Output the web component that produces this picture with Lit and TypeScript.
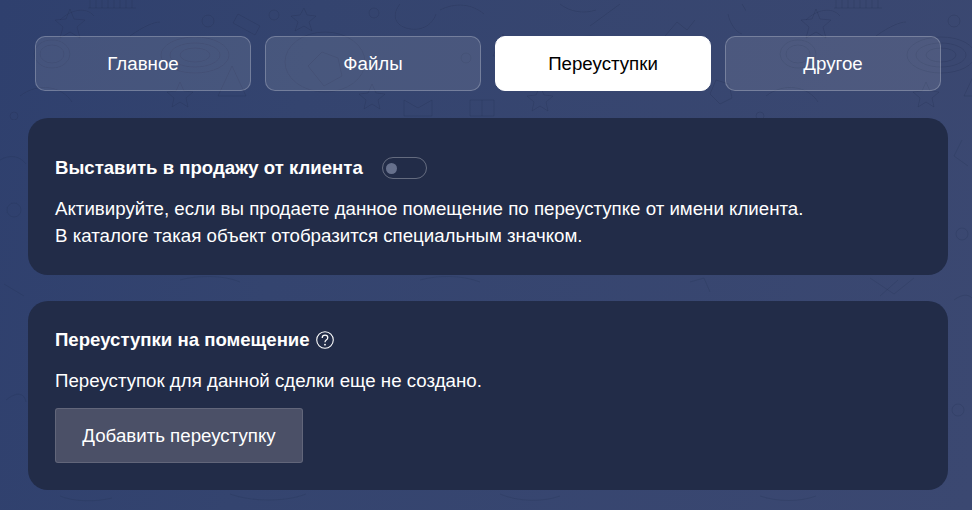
import { LitElement, html, css, svg } from "lit";
import { customElement } from "lit/decorators.js";

const tile = svg`
  <g fill="none" stroke="#1f2b4d" stroke-opacity=".26" stroke-width="1">
    <path d="M90 0v8M96 0v8M102 0v8M108 0v8M114 0v8M120 0v8M126 0v8M132 0v8M88 8h48"/>
    <path d="M70 9l4 10 11 1-8 7 3 11-10-6-10 6 3-11-8-7 11-1z"/>
    <circle cx="208" cy="21" r="6"/>
    <path d="M238 14l22 12-5 9-22-12z"/>
    <circle cx="274" cy="15" r="5"/>
    <path d="M304 8l3 7 9 1-7 6 3 9-8-5-9 5 3-9-7-6 9-1z"/>
    <path d="M130 36c14-10 24-14 30-14"/>
    <ellipse cx="52" cy="54" rx="18" ry="14"/>
    <ellipse cx="52" cy="54" rx="12" ry="9"/>
    <ellipse cx="195" cy="55" rx="34" ry="18"/>
    <ellipse cx="195" cy="55" rx="25" ry="12"/>
    <ellipse cx="195" cy="55" rx="15" ry="7"/>
    <ellipse cx="325" cy="62" rx="40" ry="30"/>
    <path d="M308 66l14-14 16 6 4 18-18 10z"/>
    <circle cx="374" cy="13" r="5"/>
    <path d="M400 4c-8 10-6 20 6 24 14 4 26-2 30-14"/>
    <path d="M440 10c16-8 32-6 44 4"/>
    <path d="M503 34l-10 22h20z"/>
    <circle cx="466" cy="58" r="5"/>
    <path d="M232 66l-14 30h28z"/>
    <path d="M180 82l4 9 9 1-7 6 2 9-8-5-8 5 2-9-7-6 9-1z"/>
    <path d="M372 84l4 9 9 1-7 6 2 9-8-5-8 5 2-9-7-6 9-1z"/>
    <path d="M20 96c18-14 42-10 52 6"/>
    <circle cx="14" cy="116" r="4"/>
    <path d="M404 100l14 8 14-8v16h-28z"/>
    <path d="M470 100h24v16h-24zM482 100v16"/>
    <path d="M60 20c10-10 26-14 34-4"/>
    <path d="M560 4c10 8 24 10 36 6"/>
    <path d="M590 26l30-22"/>
    <ellipse cx="590" cy="58" rx="40" ry="22"/>
    <ellipse cx="590" cy="58" rx="28" ry="14"/>
    <circle cx="650" cy="76" r="6"/>
    <path d="M728 14c2 10 8 18 14 20M742 4l12 20"/>
    <path d="M540 86l4 9 9 1-7 6 2 9-8-5-8 5 2-9-7-6 9-1z"/>
    <path d="M665 36l12-14 10 8 8-10"/>
    <path d="M716 80l13 4 3 14-12 6-10-10z"/>
  </g>`;

const lower = svg`
  <g fill="none" stroke="#1f2b4d" stroke-opacity=".2" stroke-width="1">
    <path d="M0 160c10-6 20-4 26 4"/>
    <circle cx="14" cy="210" r="7"/>
    <path d="M4 284l20 12"/>
    <path d="M962 140l-8 16 14 10"/>
    <path d="M954 300c8-6 14-6 18-2"/>
    <circle cx="962" cy="234" r="6"/>
    <path d="M870 278l24 16 20-16M880 296l18-16"/>
    <path d="M180 280c18-5 44-5 60 2"/>
    <path d="M420 280c18-5 42-5 60 2"/>
    <path d="M690 282l14-4 6 14"/>
    <path d="M6 400c10-8 18-8 20 2"/>
    <circle cx="958" cy="410" r="6"/>
    <path d="M60 496c14 6 36 6 52 2M230 494c22 8 56 8 76 0M500 494c18 8 44 8 60 2M760 496c18 6 40 6 56 0"/>
  </g>`;

@customElement("app-root")
export class AppRoot extends LitElement {
  static styles = css`
    :host {
      display: block;
      position: relative;
      height: 510px;
      overflow: hidden;
      font-family: "Liberation Sans", Arial, sans-serif;
      color: #fff;
      background: linear-gradient(100deg, #2f406e 0%, #34446f 30%, #3b4871 100%);
    }
    .doodles {
      position: absolute;
      inset: 0;
      width: 972px;
      height: 510px;
    }
    .page {
      position: relative;
      padding: 36px 24px 20px 28px;
      display: flex;
      flex-direction: column;
    }
    .tabs {
      display: flex;
      gap: 14px;
      padding-left: 7px;
      margin-bottom: 27px;
    }
    .tab {
      width: 216px;
      height: 55px;
      box-sizing: border-box;
      display: flex;
      align-items: center;
      justify-content: center;
      border: 1px solid rgba(255, 255, 255, 0.24);
      border-radius: 10px;
      background: rgba(255, 255, 255, 0.1);
      font-size: 18.7px;
    }
    .tab.active {
      background: #fff;
      border-color: #fff;
      color: #000;
    }
    .card {
      background: #222c48;
      border-radius: 20px;
      padding: 0 27px;
      box-sizing: border-box;
    }
    .first {
      height: 157px;
      padding-top: 39px;
      margin-bottom: 26px;
    }
    .second {
      height: 189px;
      padding-top: 28px;
    }
    .title {
      display: flex;
      align-items: center;
      height: 22px;
      font-size: 18.6px;
      font-weight: 700;
    }
    .toggle {
      width: 45px;
      height: 22px;
      box-sizing: border-box;
      margin-left: 19px;
      border: 1px solid rgba(255, 255, 255, 0.3);
      border-radius: 11px;
      display: flex;
      align-items: center;
      padding-left: 3px;
    }
    .knob {
      width: 11px;
      height: 11px;
      border-radius: 50%;
      background: #66708c;
    }
    .help {
      margin-left: 6px;
      display: block;
    }
    p {
      margin: 16px 0 0;
      font-size: 18.7px;
      line-height: 27px;
    }
    .add {
      display: flex;
      align-items: center;
      justify-content: center;
      width: 248px;
      height: 55px;
      box-sizing: border-box;
      margin-top: 14px;
      border: 1px solid rgba(255, 255, 255, 0.13);
      border-radius: 3px;
      background: #4b5067;
      color: #fff;
      font: 18.7px "Liberation Sans", Arial, sans-serif;
      padding: 0;
    }
  `;

  render() {
    return html`
      <svg class="doodles" viewBox="0 0 972 510" aria-hidden="true">
        <defs>
          <pattern id="p" width="746" height="134" patternUnits="userSpaceOnUse">${tile}</pattern>
        </defs>
        <rect width="972" height="120" fill="url(#p)" />
        ${lower}
      </svg>
      <div class="page">
        <nav class="tabs">
          <div class="tab">Главное</div>
          <div class="tab">Файлы</div>
          <div class="tab active">Переуступки</div>
          <div class="tab">Другое</div>
        </nav>
        <section class="card first">
          <div class="title">
            Выставить в продажу от клиента
            <span class="toggle"><span class="knob"></span></span>
          </div>
          <p>
            Активируйте, если вы продаете данное помещение по переуступке от имени клиента.<br />
            В каталоге такая объект отобразится специальным значком.
          </p>
        </section>
        <section class="card second">
          <div class="title">
            Переуступки на помещение
            <svg class="help" width="18" height="18" viewBox="0 0 20 20" fill="none" stroke="#fff">
              <circle cx="10" cy="10" r="9.2" stroke-width="1.2" />
              <path d="M6.9 7.8c0-1.9 1.4-3.1 3.2-3.1s3 1.1 3 2.8c0 1.3-.8 2-1.7 2.6-.9.6-1.4 1.2-1.4 2.3" stroke-width="1.4" />
              <circle cx="10" cy="15.2" r="1" fill="#fff" stroke="none" />
            </svg>
          </div>
          <p>Переуступок для данной сделки еще не создано.</p>
          <button class="add">Добавить переуступку</button>
        </section>
      </div>
    `;
  }
}
